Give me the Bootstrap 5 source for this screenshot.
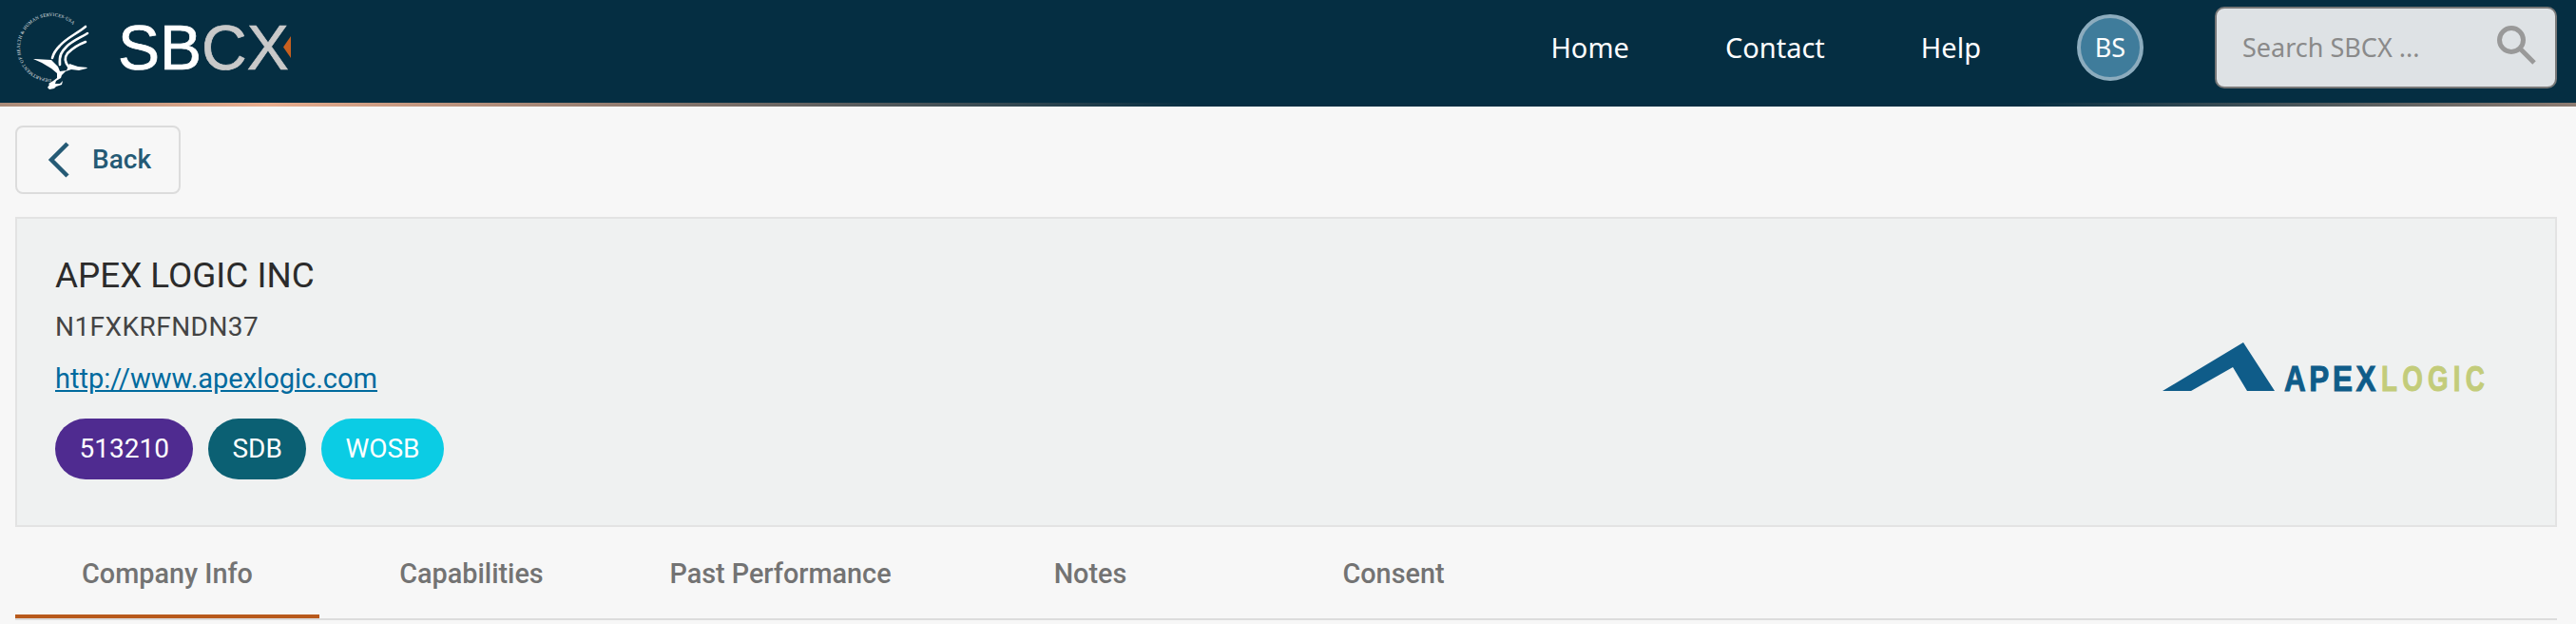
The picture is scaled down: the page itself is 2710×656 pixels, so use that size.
<!DOCTYPE html>
<html lang="en">
<head>
<meta charset="utf-8">
<title>SBCX</title>
<link href="https://cdn.jsdelivr.net/npm/bootstrap@5.3.0/dist/css/bootstrap.min.css" rel="stylesheet">
<style>
html,body{height:100%}
body{background:#f7f7f7;font-family:Roboto,sans-serif;overflow:hidden}
.topbar{height:112px;background:#052e42;position:relative;padding-bottom:12px}
.topbar-strip{height:4px;background:linear-gradient(90deg,#a98b79 0,#e8ac8d 280px,#052e42 1262px,#052e42 2126px,#8d7c72 2710px)}
.brand-box{gap:14px}
.sbcx-word{font-family:"Liberation Sans",sans-serif;font-size:66px;line-height:70px;color:#fff;position:relative;-webkit-text-stroke:.7px currentColor;white-space:nowrap}
.sbcx-grey{color:#c9c9c9}
.sbcx-mark{position:absolute;left:174px;top:23px;display:block}
.main-link{font-family:"Noto Sans",sans-serif;font-size:29px;color:#fff;text-decoration:none;line-height:38px;margin-right:101px}
.avatar{width:70px;height:70px;border:4px solid #8cacbe;background:#3f7c9b;color:#fff;font-family:"Noto Sans",sans-serif;font-size:27px}
.search-box{width:360px;height:86px;margin:0 20px 0 75px;background:#dee2e5;border:2px solid #777;border-radius:10px;padding:0 19px 0 27px}
.search-box input{background:transparent;border:0;outline:0;padding:0;width:100%;font-family:"Noto Sans",sans-serif;font-size:27px;color:#777}
.search-box input::placeholder{color:#8a8a8a;opacity:1}
.search-glass{margin-bottom:6px}
.back-wrap{padding:20px 16px 0}
.back-btn{width:174px;height:72px;border:2px solid #dcdcdc;border-radius:8px;background:transparent;color:#255a75;font-size:28px;font-weight:500;padding:0 0 0 32px;gap:23px}
.profile-panel{margin:24px 20px 0 16px;height:326px;background:#eff1f1;border:2px solid #e3e3e3;padding:38px 40px 0}
.profile-name{font-size:36.8px;line-height:44px;color:#2b2b2b;font-weight:400;margin:0}
.profile-id{font-size:28px;line-height:34px;color:#444;margin:15px 0 0;letter-spacing:.45px}
.profile-url{display:inline-block;font-size:29px;line-height:36px;color:#006a9e;margin-top:19px}
.tag-row{margin-top:24px;gap:15.5px}
.tag-pill{height:64px;border-radius:32px;color:#fff;font-size:28px;padding:0 25.5px;display:flex;align-items:center}
.tag-purple{background:#4f2b90}
.tag-teal{background:#0b6073}
.tag-cyan{background:#0bcce4}
.apex-logo{margin:0 11px 46px 0;overflow:visible}
.tab-strip{margin:0 20px 0 16px;height:98px;border-bottom:2px solid #dcdcdc}
.tab-item{height:96px;color:#737373;font-size:28.8px;font-weight:500;text-decoration:none;display:flex;align-items:center;justify-content:center;padding-top:8px;border-bottom:4px solid transparent}
.tab-on{border-bottom-color:#b85a1c}
.tab-1{width:320px}.tab-2{width:320px}.tab-3{width:330px}.tab-4{width:322px}.tab-5{width:316px}
</style>
</head>
<body>
<nav class="topbar d-flex align-items-center justify-content-between">
  <div class="brand-box d-flex align-items-center">
    <svg width="110" height="100" viewBox="0 0 110 100" aria-hidden="true">
      <defs><path id="sealarc" d="M54 83A33 33 0 1 1 80 29.5"/></defs>
      <text font-family="Liberation Serif,serif" font-size="4.9" fill="#e6eaec" letter-spacing=".2"><textPath href="#sealarc">DEPARTMENT OF HEALTH &amp; HUMAN SERVICES·USA</textPath></text>
      <g fill="none" stroke="#fff" stroke-linecap="round" stroke-width="2.6">
        <path d="M90 28C80 36 70 40 63 48c-5 5-7 9-8 13"/>
        <path d="M92 35C84 40 76 43 70 49c-5 5-8 9-7 19"/>
        <path d="M90 44C82 47 76 51 71 56c-3 4-3 9 1 14"/>
      </g>
      <path fill="#fff" d="M37 62l17 1 7 7 2 5 7-1 3-7 9 3 10 1-1 1-8 2-8-1-6 2-4 4-1 3-5 3-1 3 5 0 3-3-1 4-6 2-2 2-5 1-2-2 2-3-1-1 5-3 4-3 0-5-6-5-10-6-9-4z"/>
    </svg>
    <div class="sbcx-word"><span>SB</span><span class="sbcx-grey">CX</span>
      <svg class="sbcx-mark" width="8" height="23" viewBox="0 0 8 23" aria-hidden="true"><path fill="#c8601f" d="M0 11.5L8 0v23z"/></svg>
    </div>
  </div>
  <div class="d-flex align-items-center">
    <a class="main-link" href="#">Home</a>
    <a class="main-link" href="#">Contact</a>
    <a class="main-link" href="#">Help</a>
    <div class="avatar rounded-circle d-flex align-items-center justify-content-center">BS</div>
    <div class="search-box d-flex align-items-center">
      <input type="text" placeholder="Search SBCX ...">
      <svg class="search-glass flex-shrink-0" width="44" height="44" viewBox="0 0 44 44" aria-hidden="true"><circle cx="17" cy="17" r="12.5" fill="none" stroke="#999" stroke-width="5"/><path d="M26 26l15 15" stroke="#999" stroke-width="5"/></svg>
    </div>
  </div>
  <div class="topbar-strip position-absolute bottom-0 start-0 end-0"></div>
</nav>
<div class="back-wrap">
  <button type="button" class="back-btn d-flex align-items-center">
    <svg width="24" height="38" viewBox="0 0 24 38" aria-hidden="true"><path d="M21 2L4 19l17 17" fill="none" stroke="#255a75" stroke-width="4.5"/></svg>
    <span>Back</span>
  </button>
</div>
<section class="profile-panel d-flex justify-content-between align-items-center">
  <div class="align-self-start">
    <h1 class="profile-name">APEX LOGIC INC</h1>
    <p class="profile-id">N1FXKRFNDN37</p>
    <a class="profile-url" href="#">http://www.apexlogic.com</a>
    <div class="tag-row d-flex">
      <span class="tag-pill tag-purple">513210</span>
      <span class="tag-pill tag-teal">SDB</span>
      <span class="tag-pill tag-cyan">WOSB</span>
    </div>
  </div>
  <svg class="apex-logo" width="362" height="54" viewBox="0 0 362 54" aria-hidden="true">
    <path fill="#0f5c89" d="M0 51L85 0l33 51H89L74 26 30 51z"/>
    <text transform="translate(128 51) scale(.85 1)" font-family="Liberation Sans,sans-serif" font-weight="700" font-size="37" letter-spacing="4.3" fill="#0f5c89" stroke="#0f5c89" stroke-width="1">APEX</text>
    <text transform="translate(230 51) scale(.75 1)" font-family="Liberation Sans,sans-serif" font-weight="700" font-size="37" letter-spacing="7" fill="#c3cc7a" stroke="#c3cc7a" stroke-width="1">LOGIC</text>
  </svg>
</section>
<nav class="tab-strip d-flex">
  <a class="tab-item tab-1 tab-on" href="#">Company Info</a>
  <a class="tab-item tab-2" href="#">Capabilities</a>
  <a class="tab-item tab-3" href="#">Past Performance</a>
  <a class="tab-item tab-4" href="#">Notes</a>
  <a class="tab-item tab-5" href="#">Consent</a>
</nav>
</body>
</html>
